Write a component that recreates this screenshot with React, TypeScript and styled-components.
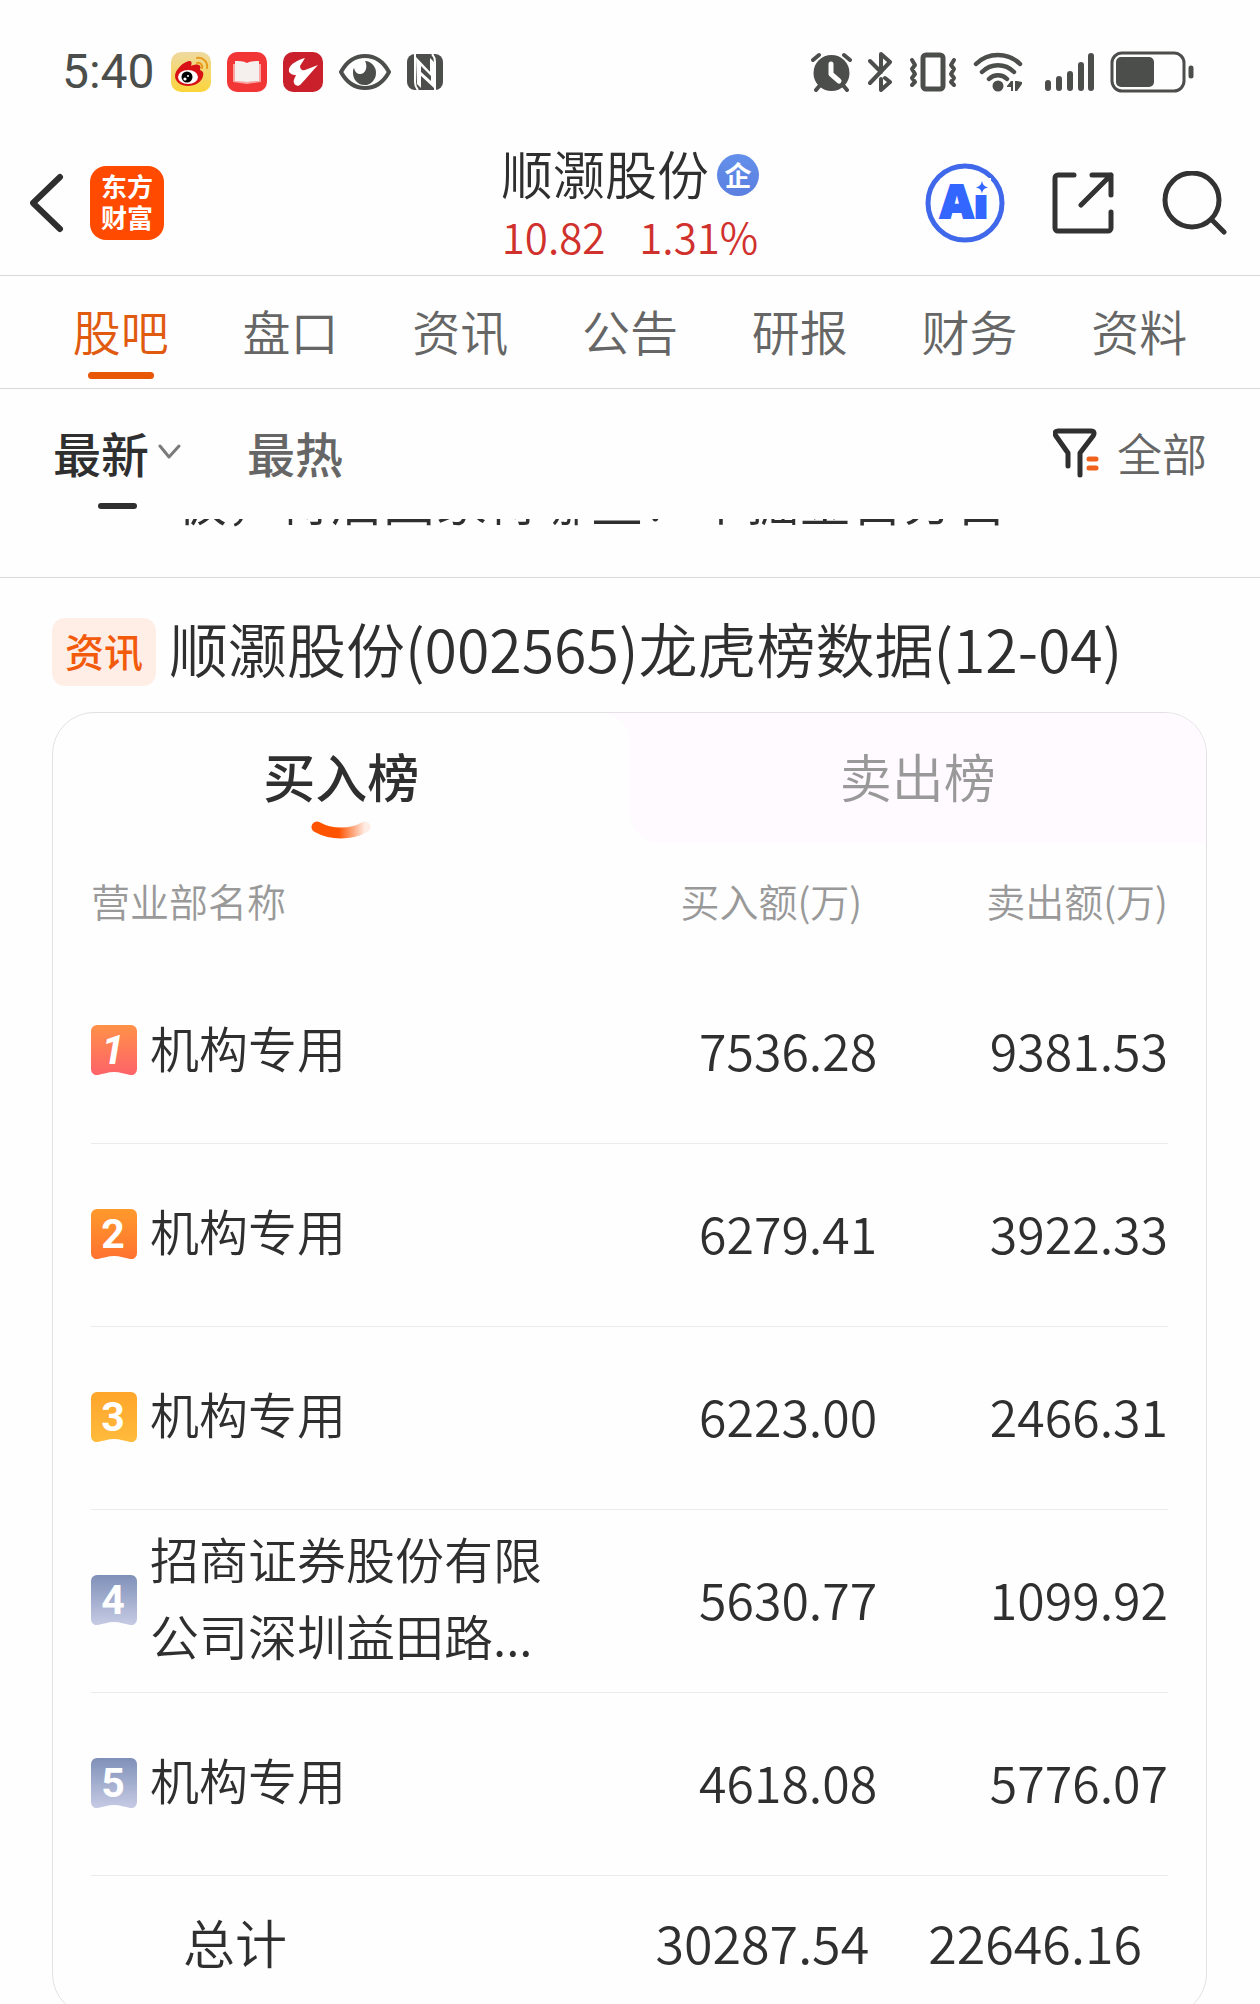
import React from "react";
import styled, { createGlobalStyle, css } from "styled-components";

const GlobalStyle = createGlobalStyle`
  * { box-sizing: border-box; }
  body {
    margin: 0;
    background: #fefefe;
    color: #2f2f2f;
    font-family: "Noto Sans CJK SC", sans-serif;
    font-weight: 350;
  }
  button, a {
    font: inherit;
    color: inherit;
    background: none;
    border: 0;
    padding: 0;
    margin: 0;
    text-decoration: none;
    cursor: pointer;
  }
  svg { display: block; flex: none; }
`;

const Screen = styled.div`
  display: flex;
  flex-direction: column;
  height: 100vh;
  overflow: hidden;
`;

/* ---------- status bar ---------- */

const StatusBar = styled.div`
  display: flex;
  flex: none;
  align-items: center;
  justify-content: space-between;
  height: 130px;
  padding: 14px 66px 0 62px;
  color: #4c4e4b;
`;

const StatusGroup = styled.div`
  display: flex;
  align-items: center;
  gap: 16px;
`;

const Clock = styled.time`
  font-family: Roboto, sans-serif;
  font-size: 48px;
  line-height: 56px;
  font-weight: 400;
`;

/* ---------- header ---------- */

const Header = styled.header`
  display: grid;
  flex: none;
  grid-template-columns: 1fr auto 1fr;
  align-items: center;
  height: 146px;
  padding: 0 30px;
  border-bottom: 1px solid #d9d9d9;
`;

const HeaderSide = styled.div<{ $end?: boolean }>`
  display: flex;
  align-items: center;
  gap: ${(p) => (p.$end ? 47 : 26)}px;
  justify-content: ${(p) => (p.$end ? "flex-end" : "flex-start")};
`;

const AppLogo = styled.a`
  display: flex;
  flex-direction: column;
  align-items: center;
  justify-content: center;
  width: 74px;
  height: 74px;
  padding-bottom: 3px;
  border-radius: 16px;
  background: #ff4a00;
  && { color: #fff; }
  font-size: 26px;
  line-height: 31px;
  font-weight: 700;
`;

const StockTitle = styled.div`
  display: flex;
  flex-direction: column;
  align-items: center;
`;

const StockName = styled.h1`
  display: flex;
  align-items: center;
  gap: 8px;
  margin: 0;
  font-size: 52px;
  line-height: 66px;
  font-weight: inherit;
`;

const CompanyBadge = styled.span`
  display: flex;
  align-items: center;
  justify-content: center;
  width: 42px;
  height: 42px;
  margin-top: 4px;
  border-radius: 50%;
  background: linear-gradient(#6390ea, #5b7fe0);
  color: #fff;
  font-size: 27px;
  line-height: 40px;
  font-weight: 700;
`;

const Quote = styled.div`
  display: flex;
  gap: 34px;
  color: #d0312d;
  font-size: 42px;
  line-height: 60px;
`;

/* ---------- navigation ---------- */

const Tabs = styled.nav`
  display: grid;
  flex: none;
  grid-template-columns: repeat(7, 1fr);
  height: 113px;
  padding: 0 36px;
  border-bottom: 1px solid #d9d9d9;
`;

const Tab = styled.a<{ $active?: boolean }>`
  display: flex;
  flex-direction: column;
  align-items: center;
  justify-content: flex-end;
  gap: 9px;
  padding-bottom: 9px;
  font-size: 48px;
  line-height: 66px;
  && { color: ${(p) => (p.$active ? "#e05a10" : "#656665")}; }
  &::after {
    content: "";
    width: 66px;
    height: 7px;
    border-radius: 4px;
    background: ${(p) => (p.$active ? "#e85607" : "transparent")};
  }
`;

const FilterBar = styled.div`
  display: flex;
  flex: none;
  justify-content: space-between;
  height: 130px;
  padding: 30px 53px 10px;
`;

const SortGroup = styled.div`
  display: flex;
  gap: 66px;
`;

const SortButton = styled.button<{ $active?: boolean }>`
  display: flex;
  flex-direction: column;
  align-items: center;
  justify-content: space-between;
  && {
    color: ${(p) => (p.$active ? "#2f2f2f" : "#656665")};
    font-weight: 500;
    font-size: 48px;
    line-height: 66px;
  }
  &::after {
    content: "";
    width: 39px;
    height: 6px;
    border-radius: 3px;
    background: ${(p) => (p.$active ? "#2f2f2f" : "transparent")};
  }
`;

const SortLabel = styled.span`
  display: flex;
  align-items: center;
  gap: 9px;
`;

const FilterButton = styled.button`
  display: flex;
  align-items: center;
  gap: 17px;
  height: 68px;
  && {
    color: #656665;
    font-size: 45px;
    line-height: 66px;
  }
`;

/* ---------- feed ---------- */

const Feed = styled.main`
  flex: 1;
  min-height: 0;
  overflow: hidden;
`;

const PreviousPost = styled.article`
  display: flex;
  align-items: flex-end;
  height: 59px;
  padding: 0 53px 40px 175px;
  overflow: hidden;
  border-bottom: 1px solid #d9d9d9;
  font-size: 52px;
  line-height: 76px;
  white-space: nowrap;
`;

const Post = styled.article`
  padding: 34px 53px 0 52px;
`;

const PostTitle = styled.h2`
  display: flex;
  align-items: center;
  gap: 13px;
  margin: 0 0 20px;
  font-size: 59px;
  line-height: 72px;
  font-weight: inherit;
  white-space: nowrap;
`;

const PostTitleText = styled.span`
  padding-bottom: 8px;
`;

const Tag = styled.span`
  padding: 0 13px 4px;
  border-radius: 13px;
  background: #ffeee6;
  color: #f25a0c;
  font-size: 39px;
  line-height: 64px;
  font-weight: 500;
`;

const Card = styled.section`
  border: 1px solid #e2e2e2;
  border-radius: 42px;
  overflow: hidden;
`;

const BoardTabs = styled.div`
  display: grid;
  grid-template-columns: 1fr 1fr;
  height: 130px;
`;

const BoardTab = styled.button<{ $active?: boolean }>`
  position: relative;
  && {
    padding-bottom: 4px;
    color: ${(p) => (p.$active ? "#2f2f2f" : "#999")};
    font-size: 52px;
    line-height: 72px;
    font-weight: ${(p) => (p.$active ? 500 : "inherit")};
  }
  ${(p) =>
    !p.$active &&
    css`
      && {
        background: #fffaff;
        border-bottom-left-radius: 30px;
      }
      &::before {
        content: "";
        position: absolute;
        top: 0;
        left: -30px;
        width: 30px;
        height: 30px;
        background: radial-gradient(circle at 0 100%, transparent 30px, #fffaff 30px);
      }
    `}
`;

const Smile = styled.svg`
  position: absolute;
  left: 50%;
  bottom: 2px;
  transform: translateX(-50%);
`;

const Board = styled.table`
  width: calc(100% - 76px);
  margin: 0 38px;
  table-layout: fixed;
  border-collapse: collapse;
`;

const HeadCell = styled.th<{ $width?: string; $end?: number }>`
  width: ${(p) => p.$width ?? "auto"};
  height: 117px;
  padding: 0 ${(p) => p.$end ?? 0}px 4px 0;
  color: #999;
  font-size: 39px;
  line-height: 54px;
  font-weight: inherit;
  text-align: ${(p) => (p.$width ? "right" : "left")};
  white-space: nowrap;
`;

const Row = styled.tr`
  height: 183px;
  border-bottom: 1px solid #ebebeb;
`;

const NameCell = styled.td`
  padding: 0 0 2px;
`;

const NameLine = styled.div`
  display: flex;
  align-items: center;
  gap: 13px;
  font-size: 49px;
  line-height: 77px;
`;

const Name = styled.span`
  flex: none;
  padding-bottom: 8px;
`;

const NumberCell = styled.td`
  padding: 0 0 4px;
  font-size: 50px;
  line-height: 77px;
  text-align: right;
`;

const TotalCell = styled.td<{ $start?: number; $end?: number }>`
  height: 140px;
  padding: 0 ${(p) => p.$end ?? 0}px 8px ${(p) => p.$start ?? 0}px;
  font-size: 52px;
  line-height: 77px;
  text-align: ${(p) => (p.$end ? "right" : "left")};
`;

/* ---------- drawings ---------- */

const WeiboIcon = () => (
  <svg width="40" height="40" viewBox="0 0 40 40">
    <defs>
      <linearGradient id="weibo" x1="0" y1="0" x2="0" y2="1">
        <stop offset="0" stopColor="#eed9a0" />
        <stop offset="1" stopColor="#fbd53a" />
      </linearGradient>
    </defs>
    <rect width="40" height="40" rx="10" fill="url(#weibo)" />
    <path d="M4 24C4 18 12 10 18 9c3 0 3 2 2 5 4-2 8-2 9 0 1 1 0 3 0 4 3 1 4 3 3 6-1 6-8 10-15 10S4 30 4 24Z" fill="#d81116" />
    <ellipse cx="17" cy="25" rx="10" ry="7" fill="#fff" />
    <circle cx="16" cy="25" r="5.500" fill="#000" />
    <circle cx="14" cy="27" r="1.600" fill="#fff" />
    <circle cx="17" cy="24" r="1" fill="#fff" />
    <path d="M26 6c6-1 11 4 10 10M26 11c3-1 6 2 5 5" fill="none" stroke="#e79a1b" strokeWidth="2" strokeLinecap="round" />
  </svg>
);

const ReaderIcon = () => (
  <svg width="40" height="40" viewBox="0 0 40 40">
    <rect width="40" height="40" rx="10" fill="#f23535" />
    <path d="M6 12h28v18c-5 1-9 1-14 2-5-1-9-1-14-2Z" fill="#f9a5a2" />
    <path d="M8 9c4 0 8 0 12 2 4-2 8-2 12-2v20c-4 0-8 0-12 1-4-1-8-1-12-1Z" fill="#f5efee" />
  </svg>
);

const SwooshIcon = () => (
  <svg width="40" height="40" viewBox="0 0 40 40">
    <rect width="40" height="40" rx="10" fill="#c9202c" />
    <path d="M22 6 17 14c0 3 2 5 5 4l13-5C29 19 24 26 18 32c-2 3-6 2-7-1-1-3 1-5 2-8-4 0-8-2-7-6C7 12 15 8 22 6Z" fill="#fff" />
  </svg>
);

const EyeIcon = () => (
  <svg width="52" height="38" viewBox="0 0 52 38">
    <path d="M2 19C8 8 16 3 26 3s18 5 24 16c-6 11-14 16-24 16S8 30 2 19Z" fill="none" stroke="currentColor" strokeWidth="4" strokeLinejoin="round" />
    <path d="M26 8a11.500 12 0 1 1-12 12c0-2 0-4 1-5 1 4 3 6 6 6 6 0 8-8 5-13Z" fill="currentColor" />
  </svg>
);

const NfcIcon = () => (
  <svg width="36" height="36" viewBox="0 0 36 36">
    <rect width="36" height="36" rx="8" fill="currentColor" />
    <path d="M8 0v28c0 4 1 6 3 8M28 36V8c0-4-1-6-3-8" fill="none" stroke="#fefefe" strokeWidth="2" />
    <path d="M9 3 27 22v5L14 14v20l-4-4Z" fill="#fefefe" />
    <path d="M27 34 13 21v-5l10 9V4l4 4Z" fill="#fefefe" />
    <path d="M14 12 24 22v5L14 18Z" fill="currentColor" />
  </svg>
);

const AlarmIcon = () => (
  <svg width="41" height="40" viewBox="0 0 41 40">
    <circle cx="20.500" cy="21" r="18" fill="currentColor" />
    <path d="M2 8 8 3M39 8l-6-5M5 38l5-6M36 38l-5-6" stroke="currentColor" strokeWidth="4" strokeLinecap="round" />
    <path d="M20 12v10l8 7" fill="none" stroke="#fefefe" strokeWidth="5" strokeLinecap="round" strokeLinejoin="round" />
  </svg>
);

const BluetoothIcon = () => (
  <svg width="25" height="40" viewBox="0 0 25 40" fill="none" stroke="currentColor" strokeWidth="4" strokeLinecap="round" strokeLinejoin="round">
    <path d="M2 9 13 20V2l9 8L2 31M17 26l5 4-9 8V27" />
  </svg>
);

const VibrateIcon = () => (
  <svg width="48" height="40" viewBox="0 0 48 40" fill="none" stroke="currentColor" strokeLinecap="round" strokeLinejoin="round">
    <rect x="14" y="3" width="20" height="34" rx="3" strokeWidth="5" />
    <path d="M3 8l3 5-3 4 3 5-3 4 3 4-3 3M45 8l-3 5 3 4-3 5 3 4-3 4 3 3" strokeWidth="4" />
  </svg>
);

const WifiIcon = () => (
  <svg width="50" height="40" viewBox="0 0 50 40">
    <g fill="none" stroke="currentColor" strokeWidth="4.500" strokeLinecap="round">
      <path d="M3 12c12-12 32-12 44 0M9 20c9-9 23-9 32 0M16 27c5-5 13-5 18 0" />
    </g>
    <circle cx="25" cy="34" r="5.500" fill="currentColor" />
    <path d="M34 34l4-5h2v10h-2v-4h-4ZM42 29h2l5 1v2l-5 7h-2Z" fill="currentColor" />
  </svg>
);

const SignalIcon = () => (
  <svg width="55" height="40" viewBox="-6 0 55 40" stroke="currentColor" strokeWidth="6" strokeLinecap="round">
    <path d="M3 31v5M14 27v9M25 22v14M36 13v23M46 4v32" />
  </svg>
);

const BatteryIcon = () => (
  <svg width="84" height="42" viewBox="0 0 84 42">
    <rect x="2" y="2" width="72" height="38" rx="10" fill="none" stroke="currentColor" strokeWidth="3" />
    <rect x="6" y="6" width="38" height="30" rx="5" fill="currentColor" />
    <path d="M81 17v8" stroke="currentColor" strokeWidth="5" strokeLinecap="round" />
  </svg>
);

const BackIcon = () => (
  <svg width="34" height="60" viewBox="2 0 34 60" fill="none" stroke="#2f2f2f" strokeWidth="6" strokeLinecap="round" strokeLinejoin="round">
    <path d="M32 4 5 30l27 26" />
  </svg>
);

const AiIcon = () => (
  <svg width="80" height="80" viewBox="0 0 80 80">
    <circle cx="40" cy="40" r="37" fill="none" stroke="#4068ea" strokeWidth="5" />
    <text x="15" y="55" fontFamily="Open Sans, sans-serif" fontSize="46" fontWeight="800" fill="#3366ff" stroke="#3366ff" strokeWidth="2">Ai</text>
    <rect x="47" y="15" width="19" height="17" fill="#fefefe" />
    <path d="M57 18c1 4 2 5 6 6.500-4 1-5 2-6 6-1-4-2-5-6-6 4-1.500 5-2.500 6-6.500Z" fill="#3366ff" />
  </svg>
);

const ShareIcon = () => (
  <svg width="62" height="62" viewBox="0 0 62 62" fill="none" stroke="#333" strokeWidth="5" strokeLinecap="round" strokeLinejoin="round">
    <path d="M22 3H6a3 3 0 0 0-3 3v50a3 3 0 0 0 3 3h50a3 3 0 0 0 3-3V40M40 3h19v20M59 3 29 33" />
  </svg>
);

const SearchIcon = () => (
  <svg width="69" height="64" viewBox="0 0 69 64" fill="none" stroke="#333" strokeWidth="5" strokeLinecap="round">
    <circle cx="31" cy="29" r="27" />
    <path d="M51 49l12 12" />
  </svg>
);

const ChevronIcon = () => (
  <svg width="23" height="16" viewBox="0 0 23 16" fill="none" stroke="#7a7a7a" strokeWidth="3" strokeLinecap="round" strokeLinejoin="round">
    <path d="M2 2l9 11 10-11" />
  </svg>
);

const FunnelIcon = () => (
  <svg width="47" height="50" viewBox="0 0 47 50" fill="none" strokeWidth="5" strokeLinecap="round" strokeLinejoin="round">
    <path d="M15 38V25L3 8C1 5 2 3 5 3h33c3 0 4 2 2 5L27 25v22" stroke="#2f2f2f" />
    <path d="M36 31h7M36 40h7" stroke="#f0611c" />
  </svg>
);

const RankBadge = ({ rank, from, to }: { rank: number; from: string; to: string }) => (
  <svg width="46" height="50" viewBox="0 0 46 50">
    <defs>
      <linearGradient id={`rank${rank}`} x1="0" y1="0" x2="0" y2="1">
        <stop offset="0" stopColor={from} />
        <stop offset="1" stopColor={to} />
      </linearGradient>
    </defs>
    <path d="M6 0h34a6 6 0 0 1 6 6v38a6 6 0 0 1-7 6C34 49 29 47 23 47S12 49 7 50a6 6 0 0 1-7-6V6a6 6 0 0 1 6-6Z" fill={`url(#rank${rank})`} />
    <text x="22" y="39" textAnchor="middle" fontFamily="Roboto, sans-serif" fontSize="41" fontStyle={rank === 1 ? "italic" : "normal"} fontWeight="700" fill="#fff">
      {rank}
    </text>
  </svg>
);

/* ---------- data ---------- */

const sections = ["股吧", "盘口", "资讯", "公告", "研报", "财务", "资料"];

const rows = [
  { lines: ["机构专用"], buy: "7536.28", sell: "9381.53", from: "#ff9148", to: "#fd6369" },
  { lines: ["机构专用"], buy: "6279.41", sell: "3922.33", from: "#ff9a2c", to: "#fe7230" },
  { lines: ["机构专用"], buy: "6223.00", sell: "2466.31", from: "#ffa52c", to: "#ffbb3c" },
  { lines: ["招商证券股份有限", "公司深圳益田路..."], buy: "5630.77", sell: "1099.92", from: "#7f90b8", to: "#c6cbe4" },
  { lines: ["机构专用"], buy: "4618.08", sell: "5776.07", from: "#7f90b8", to: "#c6cbe4" },
];

export default function App() {
  return (
    <Screen>
      <GlobalStyle />
      <StatusBar>
        <StatusGroup>
          <Clock>5:40</Clock>
          <WeiboIcon />
          <ReaderIcon />
          <SwooshIcon />
          <EyeIcon />
          <NfcIcon />
        </StatusGroup>
        <StatusGroup>
          <AlarmIcon />
          <BluetoothIcon />
          <VibrateIcon />
          <WifiIcon />
          <SignalIcon />
          <BatteryIcon />
        </StatusGroup>
      </StatusBar>

      <Header>
        <HeaderSide>
          <button aria-label="返回"><BackIcon /></button>
          <AppLogo href="#home">
            <span>东方</span>
            <span>财富</span>
          </AppLogo>
        </HeaderSide>
        <StockTitle>
          <StockName>
            顺灏股份
            <CompanyBadge>企</CompanyBadge>
          </StockName>
          <Quote>
            <span>10.82</span>
            <span>1.31%</span>
          </Quote>
        </StockTitle>
        <HeaderSide $end>
          <button aria-label="智能助手"><AiIcon /></button>
          <button aria-label="分享"><ShareIcon /></button>
          <button aria-label="搜索"><SearchIcon /></button>
        </HeaderSide>
      </Header>

      <Tabs>
        {sections.map((name, i) => (
          <Tab key={name} href={`#section-${i}`} $active={i === 0}>{name}</Tab>
        ))}
      </Tabs>

      <FilterBar>
        <SortGroup>
          <SortButton $active>
            <SortLabel>最新<ChevronIcon /></SortLabel>
          </SortButton>
          <SortButton>
            <SortLabel>最热</SortLabel>
          </SortButton>
        </SortGroup>
        <FilterButton><FunnelIcon />全部</FilterButton>
      </FilterBar>

      <Feed>
        <PreviousPost>板，待后国家待哪些？个掘金百分百</PreviousPost>
        <Post>
          <PostTitle>
            <Tag>资讯</Tag>
            <PostTitleText>顺灏股份(002565)龙虎榜数据(12-04)</PostTitleText>
          </PostTitle>
          <Card>
            <BoardTabs>
              <BoardTab $active>
                买入榜
                <Smile width="60" height="20" viewBox="0 0 60 20">
                  <defs>
                    <linearGradient id="smile">
                      <stop offset="0.450" stopColor="#ff5300" />
                      <stop offset="1" stopColor="#ff5300" stopOpacity="0.100" />
                    </linearGradient>
                  </defs>
                  <path d="M6 6c14 8 34 8 48 0" fill="none" stroke="url(#smile)" strokeWidth="11" strokeLinecap="round" />
                </Smile>
              </BoardTab>
              <BoardTab>卖出榜</BoardTab>
            </BoardTabs>
            <Board>
              <thead>
                <tr>
                  <HeadCell scope="col">营业部名称</HeadCell>
                  <HeadCell scope="col" $width="24%" $end={15}>买入额(万)</HeadCell>
                  <HeadCell scope="col" $width="27%">卖出额(万)</HeadCell>
                </tr>
              </thead>
              <tbody>
                {rows.map((r, i) => (
                  <Row key={i}>
                    <NameCell>
                      <NameLine>
                        <RankBadge rank={i + 1} from={r.from} to={r.to} />
                        <Name>
                          {r.lines.map((line) => <div key={line}>{line}</div>)}
                        </Name>
                      </NameLine>
                    </NameCell>
                    <NumberCell>{r.buy}</NumberCell>
                    <NumberCell>{r.sell}</NumberCell>
                  </Row>
                ))}
              </tbody>
              <tfoot>
                <tr>
                  <TotalCell $start={92}>总计</TotalCell>
                  <TotalCell $end={8}>30287.54</TotalCell>
                  <TotalCell $end={26}>22646.16</TotalCell>
                </tr>
              </tfoot>
            </Board>
          </Card>
        </Post>
      </Feed>
    </Screen>
  );
}
